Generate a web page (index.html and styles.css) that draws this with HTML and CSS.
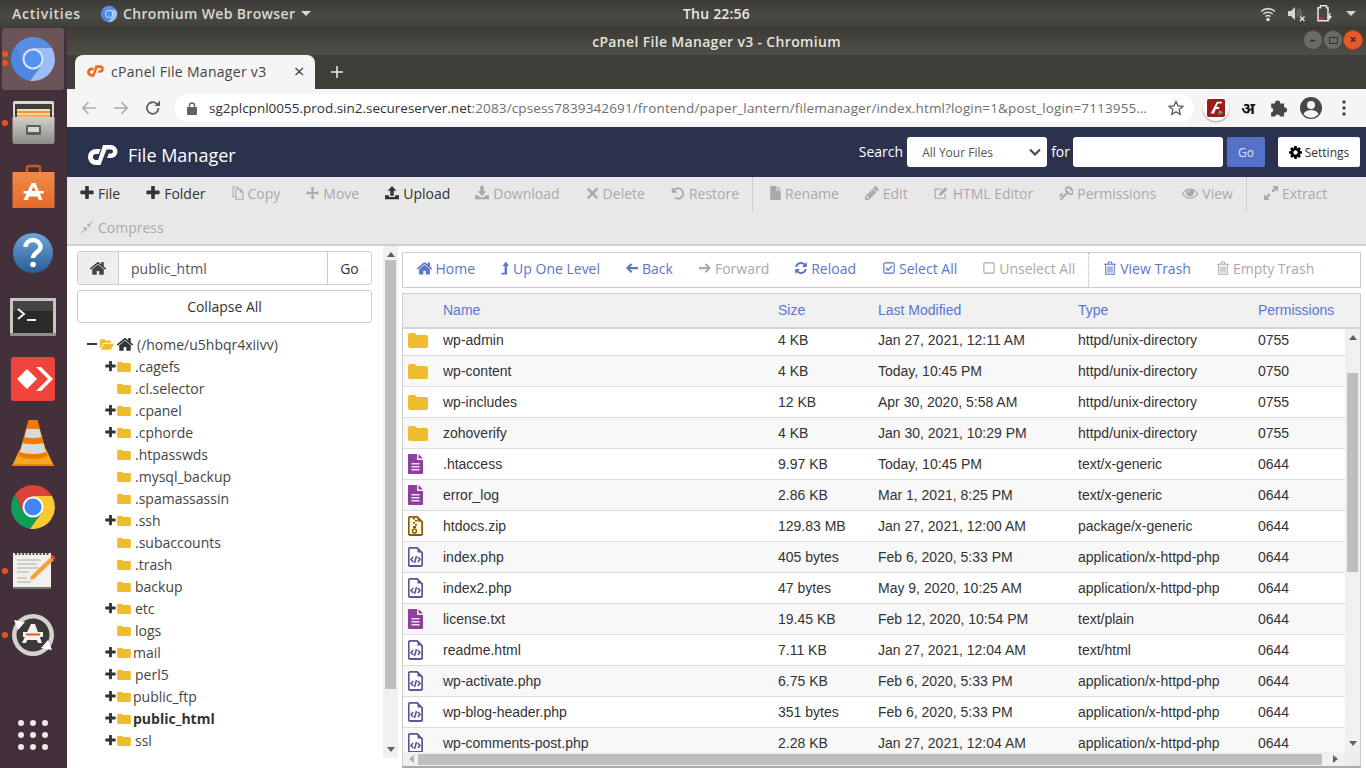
FILE: index.html
```html
<!DOCTYPE html>
<html lang="en">
<head>
<meta charset="utf-8">
<title>cPanel File Manager v3 - Chromium</title>
<link rel="stylesheet" href="styles.css">
</head>
<body>
<svg class="sprite" aria-hidden="true">
<defs>
<symbol id="plus" viewBox="150 150 1492 1492"><path d="M1600 736v192q0 40-28 68t-68 28h-416v416q0 40-28 68t-68 28h-192q-40 0-68-28t-28-68v-416h-416q-40 0-68-28t-28-68v-192q0-40 28-68t68-28h416v-416q0-40 28-68t68-28h192q40 0 68 28t28 68v416h416q40 0 68 28t28 68z"/></symbol>
<symbol id="home" viewBox="100 150 1592 1400"><path d="M1472 992v480q0 26-19 45t-45 19h-384v-384h-256v384h-384q-26 0-45-19t-19-45v-480q0-1 .5-3t.5-3l575-474 575 474q1 2 1 6zm223-69l-62 74q-8 9-21 11h-3q-13 0-21-7l-692-577-692 577q-12 8-24 7-13-2-21-11l-62-74q-8-10-7-23.5t11-21.5l719-599q32-26 76-26t76 26l244 204v-195q0-14 9-23t23-9h192q14 0 23 9t9 23v408l219 182q10 8 11 21.5t-7 23.5z"/></symbol>
<symbol id="folder" viewBox="0 0 20 16"><path d="M2 1h5l2 2h9a2 2 0 0 1 2 2v9a2 2 0 0 1-2 2H2a2 2 0 0 1-2-2V3a2 2 0 0 1 2-2z"/></symbol>
<symbol id="folder-open" viewBox="0 0 16 12"><path d="M1 0h4l1.500 1.500h5a1 1 0 0 1 1 1V4H4L1 10l-1 .5V1a1 1 0 0 1 1-1z"/><path d="M4.500 5H16l-3.500 7H.8z"/></symbol>
<symbol id="gear" viewBox="120 120 1552 1552"><path d="M1152 896q0-106-75-181t-181-75-181 75-75 181 75 181 181 75 181-75 75-181zm512-109v222q0 12-8 23t-20 13l-185 28q-19 54-39 91 35 50 107 138 10 12 10 25t-9 23q-27 37-99 108t-94 71q-12 0-26-9l-138-108q-44 23-91 38-16 136-29 186-7 28-36 28h-222q-14 0-24.500-8.500t-11.500-21.500l-28-184q-49-16-90-37l-141 107q-10 9-25 9-14 0-25-11-126-114-165-168-7-10-7-23 0-12 8-23 15-21 51-66.500t54-70.500q-27-50-41-99l-183-27q-13-2-21-12.500t-8-23.500v-222q0-12 8-23t19-13l186-28q14-46 39-92-40-57-107-138-10-12-10-24 0-10 9-23 26-36 98.500-107.500t94.500-71.500q13 0 26 10l138 107q44-23 91-38 16-136 29-186 7-28 36-28h222q14 0 24.500 8.500t11.500 21.500l28 184q49 16 90 37l142-107q9-9 24-9 13 0 25 10 129 119 165 170 7 8 7 22 0 12-8 23-15 21-51 66.500t-54 70.500q26 50 41 98l183 28q13 2 21 12.500t8 23.500z"/></symbol>
<symbol id="pencil" viewBox="120 120 1552 1552"><path d="M491 1536l91-91-235-235-91 91v107h128v128h107zm523-928q0-22-22-22-10 0-17 7l-542 542q-7 7-7 17 0 22 22 22 10 0 17-7l542-542q7-7 7-17zm-54-192l416 416-832 832h-416v-416zm683 96q0 53-37 90l-166 166-416-416 166-165q36-38 90-38 53 0 91 38l235 234q37 39 37 91z"/></symbol>
<symbol id="eye" viewBox="0 200 1792 1400"><path d="M1664 960q-152-236-381-353 61 104 61 225 0 185-131.500 316.500t-316.500 131.500-316.500-131.500-131.500-316.500q0-121 61-225-229 117-381 353 133 205 333.500 326.500t434.500 121.500 434.500-121.500 333.500-326.500zm-720-384q0-20-14-34t-34-14q-125 0-214.500 89.500t-89.500 214.500q0 20 14 34t34 14 34-14 14-34q0-86 61-147t147-61q20 0 34-14t14-34zm848 384q0 34-20 69-140 230-376.500 368.500t-499.500 138.500-499.500-139-376.500-368q-20-35-20-69t20-69q140-229 376.500-368t499.500-139 499.500 139 376.500 368q20 35 20 69z"/></symbol>
<symbol id="key" viewBox="100 100 1592 1592"><g transform="matrix(-1 0 0 1 1792 0)"><path d="M832 512q0-80-56-136t-136-56-136 56-56 136q0 42 19 83-41-19-83-19-80 0-136 56t-56 136 56 136 136 56 136-56 56-136q0-42-19-83 41 19 83 19 80 0 136-56t56-136zm851 704q0 17-49 66t-66 49q-9 0-28.500-16t-36.500-33-38.500-40-24.500-26l-96 96 220 220q28 28 28 68 0 42-39 81t-81 39q-40 0-68-28l-671-671q-176 131-365 131-163 0-265.500-102.500t-102.500-265.500q0-160 95-313t248-248 313-95q163 0 265.500 102.500t102.500 265.500q0 189-131 365l355 355 96-96q-2-2-26-24.500t-40-38.500-33-36.500-16-28.500q0-17 49-66t66-49q13 0 23 10 6 6 46 44.500t82 79.500 86.500 86 73 78 28.500 41z"/></g></symbol>
<symbol id="reload" viewBox="120 120 1552 1552"><path d="M1639 1056q0 5-1 7-64 268-268 434.500t-478 166.500q-146 0-282.500-55t-243.500-157l-129 129q-19 19-45 19t-45-19-19-45v-448q0-26 19-45t45-19h448q26 0 45 19t19 45-19 45l-137 137q71 66 161 102t187 36q134 0 250-65t186-179q11-17 53-117 8-23 30-23h192q13 0 22.500 9.500t9.500 22.500zm25-800v448q0 26-19 45t-45 19h-448q-26 0-45-19t-19-45 19-45l138-138q-148-137-349-137-134 0-250 65t-186 179q-11 17-53 117-8 23-30 23h-199q-13 0-22.500-9.500t-9.500-22.500v-7q65-268 270-434.500t480-166.500q146 0 284 55.500t245 156.500l130-129q19-19 45-19t45 19 19 45z"/></symbol>
<symbol id="copy" viewBox="0 0 14 16"><path fill="none" stroke="currentColor" stroke-width="1.300" d="M4.700 3.700h5l3 3v8.600h-8zM9.700 3.700v3h3M4.700 12.300H1.200V1h5l2 2.500"/></symbol>
<symbol id="move" viewBox="0 0 16 16"><path d="M8 0l3 3H9.200v3.800H13V5l3 3-3 3V9.200H9.200V13H11l-3 3-3-3h1.800V9.200H3V11L0 8l3-3v1.800h3.800V3H5z"/></symbol>
<symbol id="upload" viewBox="0 0 16 16"><path d="M8 0l5 5.500h-3V11H6V5.500H3zM0 10.500h4.500V12.500h7v-2H16V15H0z"/></symbol>
<symbol id="download" viewBox="0 0 16 16"><path d="M6 0h4v6h3l-5 5.500L3 6h3zM0 10.500h3.500L6 13h4l2.500-2.500H16V15H0z"/></symbol>
<symbol id="times" viewBox="0 0 16 16"><path d="M3.200 1.500L8 6.300l4.800-4.800 2.200 2.200L10.200 8.500l4.800 4.800-2.200 2.200L8 10.700l-4.800 4.800L1 13.300l4.800-4.800L1 3.700z"/></symbol>
<symbol id="restore" viewBox="0 0 16 16"><path fill="none" stroke="currentColor" stroke-width="2" d="M1.800 2.200v4.600h4.600M2.200 6.500A6 6 0 1 1 4.500 13.500"/></symbol>
<symbol id="file" viewBox="0 0 12 16"><path d="M0 0h7v5h5v11H0zM8 0l4 4H8z"/></symbol>
<symbol id="edit" viewBox="0 0 18 16"><path fill="none" stroke="currentColor" stroke-width="1.400" d="M13 9.500v4.800H1.500V3.300h7.500"/><path d="M6 8.500L13.500 1l2.500 2.500L8.500 11H6z"/></symbol>
<symbol id="extract" viewBox="0 0 16 16"><path d="M9.500 0H16v6.500l-2.200-2.200-3.500 3.500-2-2 3.500-3.500zM6.500 16H0V9.500l2.200 2.200 3.500-3.500 2 2-3.500 3.500z"/></symbol>
<symbol id="compress" viewBox="0 0 16 16"><path d="M15 1.500l-4 4 1.800 1.800H8.500V3L10.300 4.800l4-4zM1 14.500l4-4-1.800-1.800h4.300V13l-1.800-1.800-4 4z"/></symbol>
<symbol id="left" viewBox="0 0 16 14"><path d="M0 7l6.500-6.500L8.500 2.500 5.300 5.500H16v3H5.300l3.200 3-2 2z"/></symbol>
<symbol id="right" viewBox="0 0 16 14"><path d="M16 7L9.500 13.500l-2-2 3.200-3H0v-3h10.700l-3.200-3 2-2z"/></symbol>
<symbol id="up" viewBox="0 0 10 16"><path d="M6 0l4 5.500H7.500V16H.5v-2h4V5.500H2z"/></symbol>
<symbol id="check" viewBox="0 0 14 14"><rect x="1" y="1" width="12" height="12" rx="1.500" fill="none" stroke="currentColor" stroke-width="1.300"/><path fill="none" stroke="currentColor" stroke-width="1.600" d="M3.500 7l2.500 2.500 4.500-5"/></symbol>
<symbol id="square" viewBox="0 0 14 14"><rect x="1" y="1" width="12" height="12" rx="1.500" fill="none" stroke="currentColor" stroke-width="1.300"/></symbol>
<symbol id="trash" viewBox="0 0 14 16"><path fill="none" stroke="currentColor" stroke-width="1.200" d="M0 3.500h14M4.500 3.300l1-2.300h3l1 2.300M2 3.500v11.900h10V3.500M4.700 6v7.500M7 6v7.500M9.300 6v7.500"/></symbol>
<symbol id="doc-text" viewBox="0 0 15 20"><path fill="#8f3f9f" d="M1 0h8v6h6v13a1 1 0 0 1-1 1H1a1 1 0 0 1-1-1V1a1 1 0 0 1 1-1z"/><path fill="#8f3f9f" d="M10.500 0l4.500 4.500h-4.500z"/><path fill="#fff" opacity=".85" d="M3.500 9h8v1.400h-8zM3.500 12h8v1.400h-8zM3.500 15h8v1.400h-8z"/></symbol>
<symbol id="doc-code" viewBox="0 0 15 20"><path fill="#fff" stroke="#5a5698" stroke-width="1.800" d="M1.700 .9h7.500l5 5v11.800a1.300 1.300 0 0 1-1.300 1.300H2a1.300 1.300 0 0 1-1.300-1.300V1.900z"/><path fill="#5a5698" d="M9.500 1l4 4.500h-4z"/><path fill="none" stroke="#5a5698" stroke-width="1.600" d="M5.200 10L3 12.500 5.200 15M9.800 10l2.200 2.500L9.800 15M8.500 9l-2 7"/></symbol>
<symbol id="doc-zip" viewBox="0 0 15 20"><path fill="#fff8e0" stroke="#8a5a00" stroke-width="1.800" d="M1.700 .9h7.500l5 5v11.800a1.300 1.300 0 0 1-1.300 1.300H2a1.300 1.300 0 0 1-1.300-1.300V1.900z"/><path fill="#8a5a00" d="M9.500 1l4 4.500h-4zM5 2h2v1.500H5zM7 4h2v1.500H7zM5 6h2v1.500H5zM7 8h2v1.500H7zM5 10h3v2H5z"/><circle cx="6.500" cy="15" r="2" fill="none" stroke="#8a5a00" stroke-width="1.300"/></symbol>
<symbol id="cp" viewBox="0 0 30 20"><path d="M12.500 4H8a8 8 0 0 0 0 16h2.500l2-5H8a3 3 0 0 1 0-6h2.800z"/><path d="M15 0h8a6.500 6.500 0 0 1 0 13h-4l1.800-4.500H23a2 2 0 0 0 0-4h-4.500L12.500 20H8.500z"/></symbol>
<symbol id="chromium" viewBox="0 0 48 48"><path fill="#5a8ee4" d="M43 13A22 22 0 0 0 6 11.500L14.500 29.500 24 24V13z"/><path fill="#4d87e2" d="M6 11.500A22 22 0 0 0 21 45.800L33 29.500 24 24l-9.500 5.500z"/><path fill="#9cbdf6" d="M43 13H24V24l9 5.500L21 45.800A22 22 0 0 0 43 13z"/><circle cx="24" cy="24" r="10.500" fill="#dbe7fb"/><circle cx="24" cy="24" r="8.500" fill="#5391f3"/></symbol>
</defs>
</svg>

<header class="panel">
  <span class="panel-activities">Activities</span>
  <svg class="panel-logo"><use href="#chromium"/></svg>
  <span class="panel-app">Chromium Web Browser</span>
  <span class="caret"></span>
  <span class="panel-clock">Thu 22:56</span>
  <svg class="panel-ico" viewBox="0 0 16 16"><path fill="none" stroke="#d6d6d0" stroke-width="1.600" d="M1 5.500a10 10 0 0 1 14 0M3.300 8a7 7 0 0 1 9.400 0M5.500 10.500a4 4 0 0 1 5 0"/><circle cx="8" cy="13.500" r="1.700" fill="#e6e6e0"/></svg>
  <svg class="panel-ico panel-ico-wide" viewBox="0 0 18 16"><path fill="#d6d6d0" d="M0 5h3l4-4v13l-4-4H0z"/><path fill="none" stroke="#77766f" stroke-width="1.400" d="M9 4.500a5 5 0 0 1 0 6M11 2.500a8 8 0 0 1 1.500 8"/><path fill="none" stroke="#e6e6e0" stroke-width="1.500" d="M12 10.500l4.500 4.500M16.500 10.500L12 15"/></svg>
  <svg class="panel-ico" viewBox="0 0 16 18"><path fill="none" stroke="#e6e6e0" stroke-width="1.500" d="M3.500.8h6v2h1.500v13H1V2.800h2.500z"/><path fill="#e01b24" d="M2.500 12.500H7v2.300H2.500z"/><path fill="#e6e6e0" d="M13 8l-3 5h2l-1 4 4-6h-2l1-3z"/></svg>
  <span class="caret caret-right"></span>
</header>

<div class="desktop">
  <nav class="dock">
    <div class="slot slot-active"><i class="run run-a"></i><i class="run run-b"></i><svg class="dock-ico"><use href="#chromium"/></svg></div>
    <div class="slot"><i class="run"></i>
      <svg class="dock-ico" viewBox="0 0 48 48"><defs><linearGradient id="cab" x1="0" y1="0" x2="0" y2="1"><stop offset="0" stop-color="#cfcfcc"/><stop offset="1" stop-color="#8c8c89"/></linearGradient></defs><rect x="4" y="2" width="41" height="16" rx="1.500" fill="#d8d8d5"/><rect x="6" y="5" width="37" height="13" fill="#3f3e3c"/><rect x="8" y="10" width="33" height="8" fill="#f7dfb8"/><rect x="8" y="12" width="33" height="2" fill="#e9923f"/><rect x="8" y="15.500" width="33" height="2.500" fill="#f0b469"/><path d="M3.500 18h42v25a2 2 0 0 1-2 2h-38a2 2 0 0 1-2-2z" fill="url(#cab)"/><rect x="17" y="26" width="15" height="10" rx="1.500" fill="#5e5e5b"/><rect x="19" y="28" width="11" height="5" fill="#d6d6d3"/></svg></div>
    <div class="slot">
      <svg class="dock-ico" viewBox="0 0 48 48"><defs><linearGradient id="bag" x1="0" y1="0" x2="0" y2="1"><stop offset="0" stop-color="#f08a4b"/><stop offset="1" stop-color="#e56a2c"/></linearGradient></defs><path fill="none" stroke="#c9572a" stroke-width="2.500" d="M18 9V5a2 2 0 0 1 2-2h9a2 2 0 0 1 2 2v4"/><path d="M3.500 9h42v36h-42z" fill="url(#bag)"/><path fill="#fff" d="M22.500 20h4l7 17h-3.500l-1.500-3.500h-8.500L19 37h-4.500zM14.500 28h20v2.500h-20z"/><path fill="#ea7533" d="M24.500 23.500L22.500 28h4z"/></svg></div>
    <div class="slot">
      <svg class="dock-ico dock-ico-down" viewBox="0 0 48 48"><defs><linearGradient id="help" x1="0" y1="0" x2="0" y2="1"><stop offset="0" stop-color="#6ea6dc"/><stop offset="1" stop-color="#275f95"/></linearGradient></defs><circle cx="24" cy="24" r="20" fill="url(#help)"/><path fill="none" stroke="#fff" stroke-width="4.500" d="M16.500 18a7.500 7 0 0 1 15 0c0 5-7.500 5.500-7.500 11"/><circle cx="24" cy="35.500" r="2.800" fill="#fff"/></svg></div>
    <div class="slot">
      <svg class="dock-ico dock-ico-down" viewBox="0 0 48 48"><rect x="1" y="5" width="46" height="38" fill="#c6c6c4"/><rect x="1" y="40" width="46" height="3" fill="#8f8f8d"/><rect x="4" y="8" width="40" height="32" fill="#2a2a2a"/><rect x="4" y="8" width="40" height="10" fill="#444"/><path fill="none" stroke="#f2f2f2" stroke-width="2" d="M9 16l6 5-6 5"/><rect x="18" y="26" width="9" height="2" fill="#f2f2f2"/></svg></div>
    <div class="slot">
      <svg class="dock-ico" viewBox="0 0 48 48"><rect x="2" y="2" width="44" height="44" rx="3" fill="#ef443b"/><path fill="#fff" d="M18 14l10 10-10 10L8 24z"/><path fill="#fff" d="M27 12h5l12 12-12 12h-5l12-12z"/></svg></div>
    <div class="slot">
      <svg class="dock-ico" viewBox="0 0 48 48"><path fill="#f5a623" d="M3 47l8-17h26l8 17z"/><path fill="#e88700" d="M3 47h42l-1-2H4z"/><path fill="#ef7c00" d="M19.500 1h9l10 36c-6 4-23 4-29 0z"/><path fill="#d9d9d9" d="M17.500 10h13l2 8c-4 1.500-13 1.500-17 0zM13.500 24c5 1.500 16 1.500 21 0l2.500 9c-5 2.500-21 2.500-26 0z"/></svg></div>
    <div class="slot">
      <svg class="dock-ico" viewBox="0 0 48 48"><path fill="#db4437" d="M43 13A22 22 0 0 0 6 11.500L14.500 29.500 24 24V13z"/><path fill="#0f9d58" d="M6 11.500A22 22 0 0 0 21 45.800L33 29.500 24 24l-9.500 5.500z"/><path fill="#fcc934" d="M43 13H24V24l9 5.500L21 45.800A22 22 0 0 0 43 13z"/><circle cx="24" cy="24" r="10.500" fill="#fff"/><circle cx="24" cy="24" r="8.500" fill="#4285f4"/></svg></div>
    <div class="slot"><i class="run"></i>
      <svg class="dock-ico" viewBox="0 0 48 48"><rect x="4" y="6" width="38" height="34" fill="#f1f1ec"/><rect x="4" y="40" width="38" height="2" fill="#77736f"/><path stroke="#55524f" stroke-width="2" stroke-dasharray="2 1.500" d="M6 7h34"/><path stroke="#aaa" stroke-width="1" d="M8 13h24M8 17h20M8 21h22M8 25h12M8 31h10M8 35h14"/><path fill="#f2a13c" d="M42 10l3 3-20 19-4 1 1-4z"/><path fill="#d8433a" d="M43 7.500l3.500 3.500-2 2-3-3z"/></svg></div>
    <div class="slot"><i class="run"></i>
      <svg class="dock-ico" viewBox="0 0 48 48"><circle cx="24" cy="24" r="21" fill="#d3d3d0"/><circle cx="24" cy="24" r="16.500" fill="#3c3a38"/><path fill="#fff" d="M5 9l11 2-7 8zM43 39l-11-2 7-8z"/><path fill="#f2f2f2" d="M22 13h4l7 19h-4l-1.200-3h-9.600L17 32h-4zM14 21h20v5H14z"/><rect x="17" y="22.500" width="14" height="2" fill="#e95420"/></svg></div>
    <div class="slot-grid">
      <i></i><i></i><i></i><i></i><i></i><i></i><i></i><i></i><i></i>
    </div>
  </nav>

  <main class="window">
    <div class="titlebar">
      <span class="title">cPanel File Manager v3 - Chromium</span>
      <div class="controls">
        <span class="ctl">&#8211;</span><span class="ctl ctl-box"><i></i></span><span class="ctl ctl-close">&#215;</span>
      </div>
    </div>
    <div class="tabstrip">
      <div class="tab">
        <svg class="fav"><use href="#cp"/></svg>
        <span class="tab-title">cPanel File Manager v3</span>
        <span class="tab-x">&#215;</span>
      </div>
      <svg class="newtab" viewBox="0 0 12 12"><path stroke="#e8e8e8" stroke-width="1.600" d="M6 0v12M0 6h12"/></svg>
    </div>
    <div class="omni">
      <svg class="nav nav-off" viewBox="0 0 16 14"><path fill="none" stroke="currentColor" stroke-width="1.600" d="M15 7H2M7.500 1.200L1.800 7l5.700 5.800"/></svg>
      <svg class="nav nav-off" viewBox="0 0 16 14"><path fill="none" stroke="currentColor" stroke-width="1.600" d="M1 7h13M8.500 1.200L14.200 7l-5.700 5.800"/></svg>
      <svg class="nav" viewBox="0 0 16 16"><path fill="none" stroke="currentColor" stroke-width="1.800" d="M13.500 8a5.800 5.800 0 1 1-1.700-4.100"/><path fill="currentColor" d="M9.500 6H15V.5z"/></svg>
      <div class="pill">
        <svg class="lock" viewBox="0 0 10 13"><path fill="none" stroke="#5f6368" stroke-width="1.300" d="M2.500 6V3.500a2.500 2.500 0 0 1 5 0V6"/><rect y="5" width="10" height="8" rx="1" fill="#5f6368"/></svg>
        <span class="url"><b>sg2plcpnl0055.prod.sin2.secureserver.net</b>:2083/cpsess7839342691/frontend/paper_lantern/filemanager/index.html?login=1&amp;post_login=7113955&#8230;</span>
        <svg class="star" viewBox="0 0 16 16"><path fill="none" stroke="#5f6368" stroke-width="1.400" d="M8 1.500l2 4.400 4.700.5-3.500 3.200 1 4.700L8 11.900l-4.200 2.400 1-4.700L1.300 6.400 6 5.900z"/></svg>
      </div>
      <span class="ext-flash"><svg viewBox="0 0 20 20"><rect width="20" height="20" rx="2" fill="#a3181e"/><path fill="#fff" d="M11 3h6l-1 2h-4l-1.500 4H14l-1 2h-3.300L8 16H4z"/><path fill="#2fc24a" d="M13 12l5 3-5 3z"/></svg></span>
      <span class="ext-lang">अ</span>
      <svg class="ext-puzzle" viewBox="0 0 16 16"><path fill="#45474a" d="M1 4h3.500a2.300 2.300 0 1 1 4.500 0H12.500v3.500a2.300 2.300 0 1 1 0 4.500V15.500H9a2.300 2.300 0 0 0-4.500 0H1V12a2.300 2.300 0 0 0 0-4.500z"/></svg>
      <svg class="ext-user" viewBox="0 0 24 24"><circle cx="12" cy="12" r="11" fill="#45474a"/><circle cx="12" cy="9" r="4" fill="#f5f5f5"/><path fill="#f5f5f5" d="M4.500 18c1.500-3 4.500-4 7.500-4s6 1 7.500 4a9.500 9.500 0 0 1-15 0z"/></svg>
      <svg class="ext-menu" viewBox="0 0 4 16"><circle cx="2" cy="2" r="1.700" fill="#45474a"/><circle cx="2" cy="8" r="1.700" fill="#45474a"/><circle cx="2" cy="14" r="1.700" fill="#45474a"/></svg>
    </div>

    <div class="page">
      <div class="fm-head">
        <svg class="fm-logo"><use href="#cp"/></svg>
        <span class="fm-name">File Manager</span>
        <form class="search">
          <label class="s-label">Search</label>
          <div class="s-select"><span>All Your Files</span><svg viewBox="0 0 12 8"><path fill="none" stroke="#444" stroke-width="2" d="M1 1.500l5 5 5-5"/></svg></div>
          <label class="s-label">for</label>
          <div class="s-input"></div>
          <span class="s-go">Go</span>
          <span class="s-settings"><svg class="w13"><use href="#gear"/></svg>Settings</span>
        </form>
      </div>

      <div class="fm-tools">
        <span class="tool on"><svg class="w14"><use href="#plus"/></svg>File</span>
        <span class="tool on"><svg class="w14"><use href="#plus"/></svg>Folder</span>
        <span class="tool"><svg class="w12"><use href="#copy"/></svg>Copy</span>
        <span class="tool"><svg class="w13"><use href="#move"/></svg>Move</span>
        <span class="tool tool-upload on"><svg class="w14"><use href="#upload"/></svg>Upload</span>
        <span class="tool"><svg class="w14"><use href="#download"/></svg>Download</span>
        <span class="tool"><svg class="w13"><use href="#times"/></svg>Delete</span>
        <span class="tool"><svg class="w14"><use href="#restore"/></svg>Restore</span>
        <span class="tool-sep"></span>
        <span class="tool"><svg class="w11"><use href="#file"/></svg>Rename</span>
        <span class="tool"><svg class="w14"><use href="#pencil"/></svg>Edit</span>
        <span class="tool"><svg class="w15"><use href="#edit"/></svg>HTML Editor</span>
        <span class="tool"><svg class="w14"><use href="#key"/></svg>Permissions</span>
        <span class="tool"><svg class="w16"><use href="#eye"/></svg>View</span>
        <span class="tool-sep"></span>
        <span class="tool"><svg class="w14"><use href="#extract"/></svg>Extract</span>
        <span class="tool"><svg class="w14"><use href="#compress"/></svg>Compress</span>
      </div>

      <div class="fm-body">
        <aside class="side">
          <div class="side-main">
            <div class="path">
              <span class="path-home"><svg class="w16"><use href="#home"/></svg></span>
              <span class="path-val">public_html</span>
              <span class="path-go">Go</span>
            </div>
            <div class="collapse">Collapse All</div>
            <ul class="tree">
              <li class="root"><span class="minus"></span><svg class="fo"><use href="#folder-open"/></svg><svg class="rh"><use href="#home"/></svg>(/home/u5hbqr4xiivv)</li>
              <li class="has"><svg class="pl"><use href="#plus"/></svg><svg class="fd"><use href="#folder"/></svg>.cagefs</li>
              <li><svg class="fd"><use href="#folder"/></svg>.cl.selector</li>
              <li class="has"><svg class="pl"><use href="#plus"/></svg><svg class="fd"><use href="#folder"/></svg>.cpanel</li>
              <li class="has"><svg class="pl"><use href="#plus"/></svg><svg class="fd"><use href="#folder"/></svg>.cphorde</li>
              <li><svg class="fd"><use href="#folder"/></svg>.htpasswds</li>
              <li><svg class="fd"><use href="#folder"/></svg>.mysql_backup</li>
              <li><svg class="fd"><use href="#folder"/></svg>.spamassassin</li>
              <li class="has"><svg class="pl"><use href="#plus"/></svg><svg class="fd"><use href="#folder"/></svg>.ssh</li>
              <li><svg class="fd"><use href="#folder"/></svg>.subaccounts</li>
              <li><svg class="fd"><use href="#folder"/></svg>.trash</li>
              <li><svg class="fd"><use href="#folder"/></svg>backup</li>
              <li class="has"><svg class="pl"><use href="#plus"/></svg><svg class="fd"><use href="#folder"/></svg>etc</li>
              <li><svg class="fd"><use href="#folder"/></svg>logs</li>
              <li class="has tight"><svg class="pl"><use href="#plus"/></svg><svg class="fd"><use href="#folder"/></svg>mail</li>
              <li class="has"><svg class="pl"><use href="#plus"/></svg><svg class="fd"><use href="#folder"/></svg>perl5</li>
              <li class="has tight"><svg class="pl"><use href="#plus"/></svg><svg class="fd"><use href="#folder"/></svg>public_ftp</li>
              <li class="has tight cur"><svg class="pl"><use href="#plus"/></svg><svg class="fd"><use href="#folder"/></svg>public_html</li>
              <li class="has"><svg class="pl"><use href="#plus"/></svg><svg class="fd"><use href="#folder"/></svg>ssl</li>
              <li><svg class="fd"><use href="#folder"/></svg></li>
            </ul>
          </div>
          <div class="vbar vbar-side">
            <span class="arr arr-up"></span>
            <span class="vthumb"></span>
            <span class="arr arr-down"></span>
          </div>
        </aside>

        <section class="files">
          <div class="actions">
            <span class="act"><svg class="w15"><use href="#home"/></svg>Home</span>
            <span class="act"><svg class="w8"><use href="#up"/></svg>Up One Level</span>
            <span class="act"><svg class="w12"><use href="#left"/></svg>Back</span>
            <span class="act off"><svg class="w12"><use href="#right"/></svg>Forward</span>
            <span class="act"><svg class="w12"><use href="#reload"/></svg>Reload</span>
            <span class="act act-select"><svg class="w12"><use href="#check"/></svg>Select All</span>
            <span class="act off"><svg class="w12"><use href="#square"/></svg>Unselect All</span>
            <span class="act-sep"></span>
            <span class="act act-trash"><svg class="w12"><use href="#trash"/></svg>View Trash</span>
            <span class="act off"><svg class="w12"><use href="#trash"/></svg>Empty Trash</span>
          </div>
          <div class="table">
            <div class="row head"><span></span><span>Name</span><span>Size</span><span>Last Modified</span><span>Type</span><span>Permissions</span></div>
            <div class="tbody">
              <div class="rows">
                <div class="row"><svg class="ic-folder"><use href="#folder"/></svg><span>wp-admin</span><span>4 KB</span><span>Jan 27, 2021, 12:11 AM</span><span>httpd/unix-directory</span><span>0755</span></div>
                <div class="row"><svg class="ic-folder"><use href="#folder"/></svg><span>wp-content</span><span>4 KB</span><span>Today, 10:45 PM</span><span>httpd/unix-directory</span><span>0750</span></div>
                <div class="row"><svg class="ic-folder"><use href="#folder"/></svg><span>wp-includes</span><span>12 KB</span><span>Apr 30, 2020, 5:58 AM</span><span>httpd/unix-directory</span><span>0755</span></div>
                <div class="row"><svg class="ic-folder"><use href="#folder"/></svg><span>zohoverify</span><span>4 KB</span><span>Jan 30, 2021, 10:29 PM</span><span>httpd/unix-directory</span><span>0755</span></div>
                <div class="row"><svg class="ic-doc"><use href="#doc-text"/></svg><span>.htaccess</span><span>9.97 KB</span><span>Today, 10:45 PM</span><span>text/x-generic</span><span>0644</span></div>
                <div class="row"><svg class="ic-doc"><use href="#doc-text"/></svg><span>error_log</span><span>2.86 KB</span><span>Mar 1, 2021, 8:25 PM</span><span>text/x-generic</span><span>0644</span></div>
                <div class="row"><svg class="ic-doc"><use href="#doc-zip"/></svg><span>htdocs.zip</span><span>129.83 MB</span><span>Jan 27, 2021, 12:00 AM</span><span>package/x-generic</span><span>0644</span></div>
                <div class="row"><svg class="ic-doc"><use href="#doc-code"/></svg><span>index.php</span><span>405 bytes</span><span>Feb 6, 2020, 5:33 PM</span><span>application/x-httpd-php</span><span>0644</span></div>
                <div class="row"><svg class="ic-doc"><use href="#doc-code"/></svg><span>index2.php</span><span>47 bytes</span><span>May 9, 2020, 10:25 AM</span><span>application/x-httpd-php</span><span>0644</span></div>
                <div class="row"><svg class="ic-doc"><use href="#doc-text"/></svg><span>license.txt</span><span>19.45 KB</span><span>Feb 12, 2020, 10:54 PM</span><span>text/plain</span><span>0644</span></div>
                <div class="row"><svg class="ic-doc"><use href="#doc-code"/></svg><span>readme.html</span><span>7.11 KB</span><span>Jan 27, 2021, 12:04 AM</span><span>text/html</span><span>0644</span></div>
                <div class="row"><svg class="ic-doc"><use href="#doc-code"/></svg><span>wp-activate.php</span><span>6.75 KB</span><span>Feb 6, 2020, 5:33 PM</span><span>application/x-httpd-php</span><span>0644</span></div>
                <div class="row"><svg class="ic-doc"><use href="#doc-code"/></svg><span>wp-blog-header.php</span><span>351 bytes</span><span>Feb 6, 2020, 5:33 PM</span><span>application/x-httpd-php</span><span>0644</span></div>
                <div class="row"><svg class="ic-doc"><use href="#doc-code"/></svg><span>wp-comments-post.php</span><span>2.28 KB</span><span>Jan 27, 2021, 12:04 AM</span><span>application/x-httpd-php</span><span>0644</span></div>
              </div>
              <div class="vbar vbar-table">
                <span class="arr arr-up"></span>
                <span class="vthumb"></span>
                <span class="arr arr-down"></span>
              </div>
            </div>
            <div class="hbar">
              <span class="arr arr-left"></span>
              <span class="hthumb"></span>
              <span class="arr arr-right"></span>
              <span class="hcorner"></span>
            </div>
          </div>
        </section>
      </div>
    </div>
  </main>
</div>
</body>
</html>
```
FILE: styles.css
```css
* { box-sizing: border-box; }
html, body { margin: 0; padding: 0; }
body {
  width: 1366px; height: 768px; overflow: hidden;
  display: flex; flex-direction: column;
  font-family: "Open Sans", "Noto Sans", sans-serif;
  font-size: 14px; color: #333; background: #fff;
}
.sprite { width: 0; height: 0; position: absolute; }
svg { display: block; flex: none; }
ul { list-style: none; margin: 0; padding: 0; }
i { display: block; }

/* GNOME panel */
.panel {
  height: 27px; flex: none; display: flex; align-items: center;
  background: linear-gradient(#3b3a36, #4a4943 60%, #403f3a);
  color: #d8d8d2; font-weight: 600; font-size: 14px; letter-spacing: .35px;
}
.panel-activities { margin-left: 12px; width: 88px; letter-spacing: .75px; }
.panel-logo { width: 18px; height: 18px; margin-right: 5px; }
.panel-app { width: 175px; }
.caret { width: 0; height: 0; border: 5px solid transparent; border-top: 5px solid #d8d8d2; border-bottom: 0; margin-left: 3px; }
.panel-clock { margin-left: 372px; width: 88px; color: #e8e8e2; letter-spacing: .2px; margin-right: 489px; }
.panel-ico { width: 16px; height: 18px; margin-right: 12px; }
.panel-ico-wide { width: 18px; margin-right: 11px; }
.caret-right { margin-left: 1px; }

.desktop { flex: 1; display: flex; min-height: 0; }

/* Dock */
.dock { width: 67px; flex: none; background: #43303a; display: flex; flex-direction: column; }
.slot { height: 64px; flex: none; display: flex; align-items: center; justify-content: center; position: relative; }
.slot-active::before { content: ""; position: absolute; left: 2px; right: 3px; top: 1px; bottom: 1px; background: #6a5458; border-radius: 3px; }
.dock-ico { width: 48px; height: 48px; position: relative; margin-left: -1px; }
.dock-ico-down { margin-top: 3px; }
.run { position: absolute; left: 2px; top: 29px; width: 6px; height: 6px; border-radius: 50%; background: #e95420; z-index: 1; }
.run-a { top: 24px; }
.run-b { top: 33px; }
.slot-grid { margin-top: auto; margin-left: 18px; margin-bottom: 18px; display: grid; grid-template-columns: repeat(3, 6px); gap: 6px; }
.slot-grid i { width: 6px; height: 6px; border-radius: 50%; background: #ecebe9; }

/* Window */
.window { flex: 1; display: flex; flex-direction: column; min-width: 0; }
.titlebar {
  height: 28px; flex: none; display: flex; align-items: center; justify-content: center; position: relative;
  background: linear-gradient(#3b3a35, #504e47);
  color: #e4e4de; font-weight: 600; font-size: 14px; letter-spacing: .33px;
}
.controls { position: absolute; right: 3px; top: 3px; display: flex; gap: 0; }
.ctl {
  width: 20px; height: 20px; border-radius: 50%; background: #6b6a63; color: #2f2e2a;
  display: flex; align-items: center; justify-content: center; font-size: 12px; line-height: 1; font-weight: 700;
  border: 1px solid #4a4943;
}
.ctl i { width: 9px; height: 7px; border: 1px solid #2f2e2a; }
.ctl-close { background: #e9582a; border-color: #b5431c; }
.tabstrip { height: 34px; flex: none; background: #3f3e38; display: flex; align-items: flex-end; padding-left: 8px; }
.tab {
  width: 240px; height: 34px; background: #f5f5f5; border-radius: 8px 8px 0 0;
  display: flex; align-items: center; padding: 0 10px 2px 12px; color: #444; font-size: 14px; letter-spacing: .3px;
}
.fav { width: 17px; height: 12px; color: #f26a21; fill: currentColor; margin-right: 7px; }
.tab-title { flex: 1; white-space: nowrap; }
.tab-x { color: #444; font-size: 19px; line-height: 1; }
.newtab { width: 12px; height: 12px; margin: 0 0 11px 16px; }

.omni { height: 38px; flex: none; background: #f5f5f5; display: flex; align-items: center; padding-left: 14px; }
.nav { width: 16px; height: 16px; margin-right: 16px; color: #5c5f63; }
.nav-off { color: #a8abaf; }
.pill { width: 1019px; height: 28px; margin-left: -2px; background: #fff; border-radius: 14px; display: flex; align-items: center; padding-left: 12px; }
.lock { width: 10px; height: 13px; margin-right: 12px; }
.url { width: 949px; white-space: nowrap; overflow: hidden; color: #6d6f73; font-size: 13.500px; letter-spacing: .14px; }
.url b { font-weight: 400; color: #2f3033; letter-spacing: 0; }
.star { width: 16px; height: 16px; margin-left: 10px; }
.ext-flash { width: 26px; height: 26px; margin-left: 9px; border-radius: 50%; background: #fff; box-shadow: 0 1px 2px #999; display: flex; align-items: center; justify-content: center; }
.ext-flash svg { width: 18px; height: 18px; }
.ext-lang { width: 20px; margin-left: 9px; text-align: center; color: #111; font-size: 16px; font-family: "Noto Sans", "DejaVu Sans", sans-serif; font-weight: 700; }
.ext-puzzle { width: 18px; height: 18px; margin-left: 12px; }
.ext-user { width: 24px; height: 24px; margin-left: 11px; }
.ext-menu { width: 4px; height: 16px; margin-left: 19px; }

/* Page */
.page { flex: 1; display: flex; flex-direction: column; min-height: 0; background: #fff; }
.fm-head { height: 50px; flex: none; background: #2b324e; display: flex; align-items: center; padding: 0 6px 0 21px; color: #fff; }
.fm-logo { width: 30px; height: 20px; color: #fff; fill: currentColor; margin: 6px 10px 0 0; }
.fm-name { font-size: 18px; margin-top: 5px; }
.search { margin: 0 0 0 auto; display: flex; align-items: center; }
.s-label { margin: -1px 4px 0; }
.s-select {
  width: 140px; height: 30px; background: #fff; border-radius: 3px; color: #555; font-size: 12px;
  display: flex; align-items: center; justify-content: space-between; padding: 0 6px 0 15px;
}
.s-select svg { width: 12px; height: 8px; }
.s-input { width: 150px; height: 30px; background: #fff; border-radius: 3px; margin-left: -1px; }
.s-go { width: 38px; height: 30px; margin-left: 4px; background: #5470c8; border-radius: 2px; display: flex; align-items: center; justify-content: center; font-size: 12px; color: #dfe6fa; }
.s-settings { width: 82px; height: 30px; margin-left: 13px; background: #fff; border-radius: 2px; color: #333; font-size: 12px; display: flex; align-items: center; justify-content: center; gap: 3px; }
.s-settings svg { height: 13px; }

.fm-tools { height: 69px; flex: none; background: #e8e8e8; border-bottom: 2px solid #cfcfcf; display: flex; flex-wrap: wrap; align-content: flex-start; }
.tool { height: 34px; padding: 0 13px 2px; display: flex; align-items: center; color: #a9a9a9; fill: currentColor; }
.tool svg { height: 14px; margin-right: 4px; }
.tool.on { color: #333; }
.tool-upload { padding-right: 12px; }
.tool-sep { width: 1px; height: 35px; margin: 0 4px -1px 0; border-left: 1px dotted #b5b5b5; }
.w8 { width: 8px; } .w11 { width: 11px; } .w12 { width: 12px; } .w13 { width: 13px; }
.w14 { width: 14px; } .w15 { width: 15px; } .w16 { width: 16px; }

.fm-body { flex: 1; display: flex; min-height: 0; }
.side { width: 335px; flex: none; display: flex; padding: 0 0 10px 10px; }
.side-main { width: 295px; flex: none; padding-top: 5px; height: 100%; overflow: hidden; }
.path { height: 34px; display: flex; border: 1px solid #ccc; border-radius: 3px; }
.path-home { width: 41px; background: #eee; border-right: 1px solid #ccc; display: flex; align-items: center; justify-content: center; color: #444; fill: currentColor; }
.path-home svg { height: 14px; }
.path-val { flex: 1; display: flex; align-items: center; padding-left: 12px; color: #555; }
.path-go { width: 44px; border-left: 1px solid #ccc; display: flex; align-items: center; justify-content: center; color: #333; }
.collapse { height: 33px; margin-top: 5px; border: 1px solid #ccc; border-radius: 3px; display: flex; align-items: center; justify-content: center; color: #333; }
.tree { margin-top: 10px; height: 424px; overflow: hidden; }
.tree li { height: 22px; display: flex; align-items: center; padding-left: 40px; white-space: nowrap; color: #444; }
.tree li.has { padding-left: 28px; }
.tree li.root { padding-left: 10px; }
.minus { width: 10px; height: 2px; background: #333; margin-right: 3px; }
.fo { width: 14px; height: 11px; fill: #eebc2e; margin-right: 3px; }
.rh { width: 16px; height: 14px; fill: #333; margin-right: 4px; }
.pl { width: 11px; height: 11px; fill: #333; margin-right: 1px; }
.fd { width: 14px; height: 11px; fill: #eebc2e; margin-right: 4px; }
.tree li.tight .fd { margin-right: 2px; }
.tree li.cur { font-weight: 700; color: #333; }

.vbar { background: #f0f0f0; display: flex; flex-direction: column; align-items: center; position: relative; }
.vbar-side { width: 15px; margin-left: 11px; flex: none; }
.vthumb { width: 11px; background: #bebebe; }
.vbar-side .vthumb { margin-top: 3px; height: 429px; }
.vbar-table { width: 15px; flex: none; }
.vbar-table .vthumb { margin-top: 33px; height: 199px; }
.arr { width: 0; height: 0; border: 4px solid transparent; flex: none; }
.arr-up { border-top: 0; border-bottom: 5px solid #606060; margin-top: 6px; }
.arr-down { border-bottom: 0; border-top: 5px solid #606060; position: absolute; bottom: 6px; }
.arr-left { border-left: 0; border-right: 5px solid #b0b0b0; margin-left: 6px; }
.arr-right { border-right: 0; border-left: 5px solid #606060; }

.files { flex: 1; min-width: 0; display: flex; flex-direction: column; padding: 6px 5px 0 0; }
.actions { height: 36px; flex: none; border: 1px solid #ccc; background: #fff; display: flex; align-items: center; padding-left: .5px; color: #5b76c9; fill: currentColor; }
.act { padding: 0 13px 4px; display: flex; align-items: center; height: 100%; white-space: nowrap; }
.act svg { height: 14px; margin-right: 4px; }
.act.off { color: #a9a9a9; }
.act-select { margin-left: 1px; }
.act-trash { margin-left: 2px; }
.act-sep { height: 100%; width: 1px; border-left: 1px dotted #b5b5b5; }
.table { flex: 1; min-height: 0; margin-top: 5px; border: 1px solid #ccc; border-bottom: 2px solid #aaa; display: flex; flex-direction: column; font-family: "Liberation Sans", Arial, sans-serif; }
.row { display: grid; grid-template-columns: 40px 335px 100px 200px 180px 1fr; height: 31px; align-items: center; border-bottom: 1px solid #ddd; background: #fff; }
.row:nth-child(even) { background: #f8f8f8; }
.row > svg { margin-left: 5px; }
.row.head { height: 35px; flex: none; background: #f0f0f0; border-bottom: 2px solid #d4d4d4; color: #5b76d0; padding-bottom: 2px; }
.tbody { flex: 1; min-height: 0; display: flex; overflow: hidden; }
.rows { flex: 1; min-width: 0; margin-top: -4px; }
.ic-folder { width: 20px; height: 16px; fill: #eebc2e; }
.ic-doc { width: 15px; height: 20px; }
.hbar { height: 14px; flex: none; background: #f0f0f0; display: flex; align-items: center; }
.hthumb { width: 904px; height: 11px; background: #bebebe; margin: 0 11px 0 4px; }
.hcorner { width: 15px; height: 100%; margin-left: auto; background: #ececec; }
```
